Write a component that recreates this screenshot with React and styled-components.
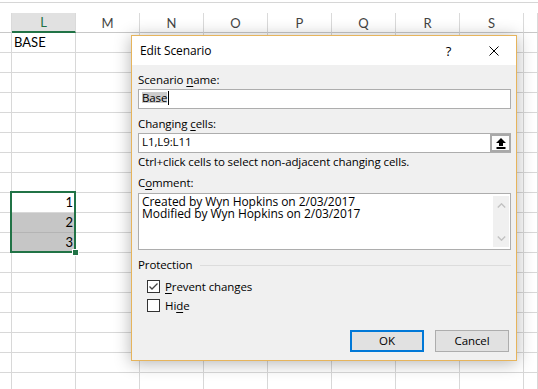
import React from 'react';
import styled, { createGlobalStyle } from 'styled-components';

const GlobalStyle = createGlobalStyle`
  html, body { margin: 0; padding: 0; background: #fff; }
  #root { width: 538px; height: 389px; }
`;

const Sheet = styled.div`
  position: relative;
  width: 538px;
  height: 389px;
  overflow: hidden;
  background: #fff;
  font-family: Lato, "Liberation Sans", sans-serif;
`;

const FormulaEdge = styled.div`
  height: 2px;
  border-bottom: 1px solid #d6d6d6;
  margin-bottom: 10px;
`;

const Grid = styled.div`
  display: grid;
  grid-template-columns: 12px repeat(8, 64px) 1fr;
  grid-auto-rows: 20px;
`;

const HeaderCell = styled.div`
  box-sizing: border-box;
  border-right: 1px solid #dadada;
  border-bottom: ${(p) => (p.$active ? '2px solid #217346' : '1px solid #c8c8c8')};
  background: ${(p) => (p.$active ? '#e1e1e1' : '#fff')};
  color: ${(p) => (p.$active ? '#217346' : '#444')};
  display: flex;
  align-items: center;
  justify-content: center;
  font-size: 13px;
`;

const Cell = styled.div`
  box-sizing: border-box;
  border-right: 1px solid #d8d8d8;
  border-bottom: 1px solid ${(p) => (p.$shade ? '#b4b4b4' : '#d8d8d8')};
  background: ${(p) => (p.$shade ? '#c6c6c6' : '#fff')};
  font-size: 13px;
  line-height: 19px;
  color: #000;
  padding: 0 2px;
  text-align: ${(p) => (p.$num ? 'right' : 'left')};
  white-space: nowrap;
`;

const Selection = styled.div`
  position: absolute;
  left: 10px;
  top: 191px;
  width: 66px;
  height: 62px;
  box-sizing: border-box;
  border: 2px solid #217346;
  pointer-events: none;
`;

const FillHandle = styled.div`
  position: absolute;
  left: 72px;
  top: 249px;
  width: 5px;
  height: 5px;
  background: #217346;
  border: 1px solid #fff;
`;

/* ---------- dialog ---------- */

const Dialog = styled.div`
  position: absolute;
  left: 131px;
  top: 35px;
  width: 386px;
  height: 326px;
  box-sizing: border-box;
  border: 1px solid #e6b45c;
  box-shadow: 0 2px 16px rgba(0, 0, 0, 0.3);
  display: flex;
  flex-direction: column;
  font-family: "Open Sans", "Noto Sans", sans-serif;
  font-size: 11.5px;
  letter-spacing: -0.1px;
  color: #000;
`;

const TitleBar = styled.div`
  height: 29px;
  flex-shrink: 0;
  background: #fff;
  display: flex;
  align-items: center;
  padding-left: 8px;
  line-height: 16px;
  font-size: 12px;
`;

const Title = styled.span`
  flex: 1;
`;

const TitleButton = styled.div`
  width: 45px;
  height: 29px;
  display: flex;
  align-items: center;
  justify-content: center;
  font-size: 13px;
`;

const Body = styled.div`
  flex: 1;
  background: #f0f0f0;
  padding: 7px 5px 8px 6px;
  display: flex;
  flex-direction: column;
`;

const Label = styled.div`
  line-height: 16px;
  margin-top: ${(p) => p.$mt || 0}px;
  white-space: nowrap;
`;

const Key = styled.span`
  text-decoration: underline;
  text-underline-offset: 2px;
`;

const Field = styled.div`
  box-sizing: border-box;
  height: 20px;
  margin-top: 1px;
  background: #fff;
  border: 1px solid #adadad;
  display: flex;
  align-items: center;
  padding: 0 0 2px 3px;
  line-height: 16px;
`;

const FieldText = styled.div`
  flex: 1;
  white-space: nowrap;
`;

const Selected = styled.span`
  display: inline-block;
  line-height: 11px;
  background: #cccccc;
`;

const Caret = styled.span`
  display: inline-block;
  width: 1px;
  height: 14px;
  background: #000;
  margin-left: 1px;
  vertical-align: -3px;
`;

const RefButton = styled.div`
  box-sizing: border-box;
  width: 21px;
  height: 18px;
  margin-right: -1px;
  margin-bottom: -2px;
  border: 2px solid #a9a9a9;
  background: #fcfcfc;
  display: flex;
  align-items: center;
  justify-content: center;
`;

const CommentBox = styled.div`
  box-sizing: border-box;
  height: 57px;
  margin-top: 2px;
  background: #fff;
  border: 1px solid #adadad;
  display: flex;
`;

const CommentText = styled.div`
  flex: 1;
  padding: 2px 3px;
  line-height: 12px;
  font-size: 12px;
  letter-spacing: -0.05px;
  white-space: pre;
`;

const ScrollBar = styled.div`
  width: 16px;
  margin: 2px 1px 2px 0;
  background: #f0f0f0;
  display: flex;
  flex-direction: column;
  justify-content: space-between;
  align-items: center;
  padding: 7px 0 6px;
`;

const GroupHead = styled.div`
  display: flex;
  align-items: center;
  line-height: 16px;
  margin-top: 7px;
`;

const GroupLine = styled.div`
  flex: 1;
  height: 1px;
  background: #dcdcdc;
  margin-left: 7px;
`;

const CheckRow = styled.label`
  display: flex;
  align-items: center;
  height: 13px;
  line-height: 13px;
  margin-left: 9px;
  margin-top: ${(p) => p.$mt}px;
  gap: 5px;
`;

const Box = styled.span`
  box-sizing: border-box;
  width: 13px;
  height: 13px;
  border: 1px solid #333;
  background: #fff;
  display: flex;
`;

const Buttons = styled.div`
  margin-top: auto;
  display: flex;
  justify-content: flex-end;
  gap: 11px;
  margin-right: 2px;
`;

const Button = styled.div`
  box-sizing: border-box;
  width: 74px;
  height: 22px;
  background: #e1e1e1;
  border: ${(p) => (p.$primary ? '2px solid #0078d7' : '1px solid #adadad')};
  display: flex;
  align-items: center;
  justify-content: center;
  line-height: 16px;
`;

const Chevron = ({ up }) => (
  <svg width="9" height="5" viewBox="0 0 9 5">
    <path
      d={up ? 'M0.8 4.4 L4.5 0.8 L8.2 4.4' : 'M0.8 0.6 L4.5 4.2 L8.2 0.6'}
      fill="none"
      stroke="#c2c2c2"
      strokeWidth="1.4"
    />
  </svg>
);

const columns = ['', 'L', 'M', 'N', 'O', 'P', 'Q', 'R', 'S', ''];
const values = { 1: 'BASE', 9: '1', 10: '2', 11: '3' };

export default function App() {
  const rows = Array.from({ length: 18 }, (_, i) => i + 1);
  return (
    <>
      <GlobalStyle />
      <Sheet>
        <FormulaEdge />
        <Grid>
          {columns.map((c, i) => (
            <HeaderCell key={'h' + i} $active={c === 'L'}>
              {c}
            </HeaderCell>
          ))}
          {rows.map((r) =>
            columns.map((c, i) => {
              const v = c === 'L' ? values[r] : undefined;
              return (
                <Cell
                  key={r + '-' + i}
                  $num={r >= 9}
                  $shade={c === 'L' && (r === 10 || r === 11)}
                >
                  {v}
                </Cell>
              );
            })
          )}
        </Grid>
        <Selection />
        <FillHandle />

        <Dialog>
          <TitleBar>
            <Title>Edit Scenario</Title>
            <TitleButton>?</TitleButton>
            <TitleButton>
              <svg width="10" height="10" viewBox="0 0 10 10">
                <path d="M0.5 0.5 L9.5 9.5 M9.5 0.5 L0.5 9.5" stroke="#000" strokeWidth="1" />
              </svg>
            </TitleButton>
          </TitleBar>
          <Body>
            <Label>
              Scenario <Key>n</Key>ame:
            </Label>
            <Field>
              <FieldText>
                <Selected>Base</Selected>
                <Caret />
              </FieldText>
            </Field>
            <Label $mt={7}>
              Changing <Key>c</Key>ells:
            </Label>
            <Field>
              <FieldText>L1,L9:L11</FieldText>
              <RefButton>
                <svg width="10" height="11" viewBox="0 0 10 11">
                  <path d="M5 0 L10 5 L7 5 L7 8 L3 8 L3 5 L0 5 Z" fill="#000" />
                  <rect x="0.5" y="9" width="9" height="2" fill="#000" />
                </svg>
              </RefButton>
            </Field>
            <Label $mt={1}>Ctrl+click cells to select non-adjacent changing cells.</Label>
            <Label $mt={5}>
              C<Key>o</Key>mment:
            </Label>
            <CommentBox>
              <CommentText>
                {'Created by Wyn Hopkins on 2/03/2017\nModified by Wyn Hopkins on 2/03/2017'}
              </CommentText>
              <ScrollBar>
                <Chevron up />
                <Chevron />
              </ScrollBar>
            </CommentBox>
            <GroupHead>
              Protection
              <GroupLine />
            </GroupHead>
            <CheckRow $mt={7}>
              <Box>
                <svg width="11" height="11" viewBox="0 0 11 11">
                  <path d="M1.5 5.5 L4 8 L9.5 2.5" fill="none" stroke="#444" strokeWidth="1.3" />
                </svg>
              </Box>
              <span>
                <Key>P</Key>revent changes
              </span>
            </CheckRow>
            <CheckRow $mt={6}>
              <Box />
              <span>
                Hi<Key>d</Key>e
              </span>
            </CheckRow>
            <Buttons>
              <Button $primary>OK</Button>
              <Button>Cancel</Button>
            </Buttons>
          </Body>
        </Dialog>
      </Sheet>
    </>
  );
}
